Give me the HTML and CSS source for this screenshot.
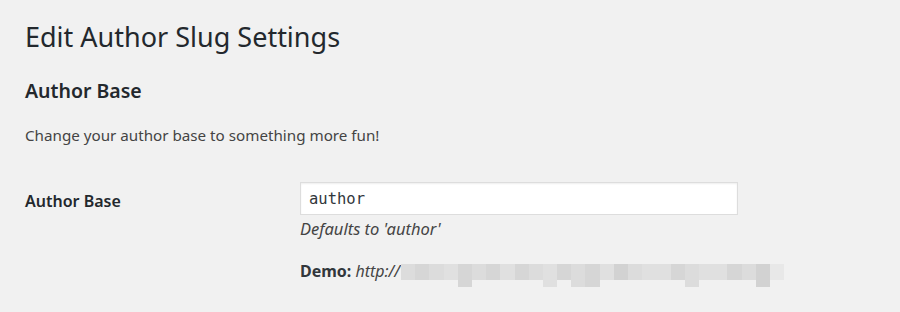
FILE: index.html
```html
<!DOCTYPE html>
<html>
<head>
<meta charset="utf-8">
<link rel="stylesheet" href="styles.css">
</head>
<body>
<div class="wrap">
  <h1 class="title">Edit Author Slug Settings</h1>
  <h2 class="section">Author Base</h2>
  <p class="intro">Change your author base to something more fun!</p>
  <div class="row">
    <div class="label">Author Base</div>
    <div class="field">
      <input class="input" type="text" value="author">
      <p class="desc">Defaults to 'author'</p>
      <p class="demo"><strong>Demo:</strong> <em>http://</em><span class="blur"><span class="px a"></span><span class="px b"></span><span class="px a"></span><span class="px c"></span><span class="px b tail"></span><span class="px a"></span><span class="px b"></span><span class="px c"></span><span class="px b"></span><span class="px a"></span><span class="px c tail"></span><span class="px b"></span><span class="px a tail"></span><span class="px b tail"></span><span class="px c"></span><span class="px d"></span><span class="px a"></span><span class="px c"></span><span class="px c"></span><span class="px b"></span><span class="px a tail"></span><span class="px c"></span><span class="px c"></span><span class="px b"></span><span class="px a"></span><span class="px d tail"></span><span class="px e"></span></span></p>
    </div>
  </div>
</div>
</body>
</html>
```
FILE: styles.css
```css
html, body { margin: 0; padding: 0; }
body {
  background: #f1f1f1;
  color: #444;
  font-family: "Noto Sans", sans-serif;
  font-size: 15px;
  width: 900px;
  height: 312px;
  overflow: hidden;
}
.wrap { padding: 18px 0 0 25px; }
.title {
  margin: 0;
  font-size: 27px;
  font-weight: 400;
  color: #23282d;
  line-height: 38px;
}
.section {
  margin: 21px 0 0;
  font-size: 19.5px;
  font-weight: 600;
  color: #23282d;
  line-height: 28px;
}
.intro { margin: 18px 0 0; line-height: 24px; font-size: 15.2px; }
.row { display: grid; grid-template-columns: 275px 438px; margin-top: 35px; }
.label { font-size: 16px; font-weight: 600; color: #23282d; padding-top: 7px; line-height: 24px; }
.input {
  box-sizing: border-box;
  width: 438px;
  height: 33px;
  margin: 0;
  border: 1px solid #ddd;
  background: #fff;
  padding: 0 8px;
  font-family: "DejaVu Sans Mono", monospace;
  font-size: 15.5px;
  color: #32373c;
  box-shadow: inset 0 1px 2px rgba(0,0,0,.07);
}
.desc { margin: 2px 0 0; font-style: italic; font-size: 16.5px; line-height: 24px; }
.demo { margin: 18px 0 0; font-size: 16px; line-height: 24px; display: flex; align-items: center; }
.demo strong { color: #32373c; margin-right: 4px; }
.demo em { margin-right: 1px; }
.blur { display: flex; height: 16px; align-items: flex-start; margin-top: 2px; }
.px { width: 14.2px; height: 16px; }
.px.a { background: #dcdcdc; }
.px.b { background: #d6d6d6; }
.px.c { background: #e0e0e0; }
.px.d { background: #d2d2d2; }
.px.e { background: #e8e8e8; }
.px.tail { height: 23px; }
```
